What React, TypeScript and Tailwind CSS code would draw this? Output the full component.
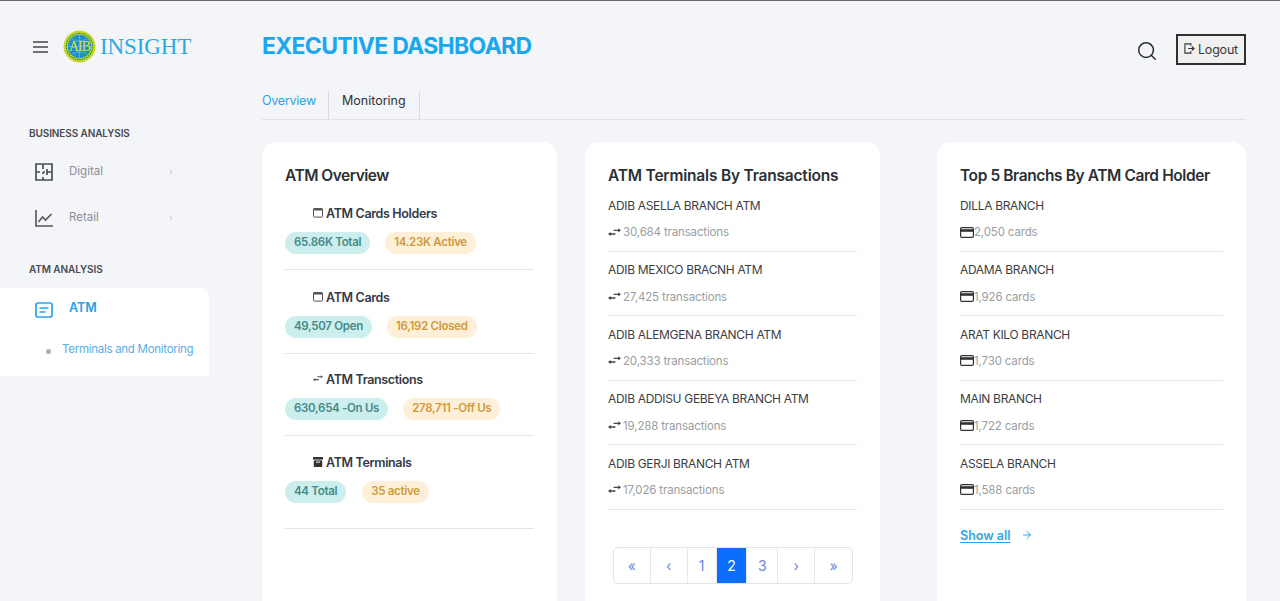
import React from "react";
import { ChevronRight, Search, ArrowRight } from "lucide-react";

const Swap = ({ c = "" }: { c?: string }) => (
  <svg viewBox="0 0 14 9" className={c} fill="currentColor" aria-hidden="true">
    <path d="M6 1.500h5V0l3 2.200-3 2.200V2.900H6z" />
    <path d="M8 5.300H3V3.900L0 6.200l3 2.200V6.800h5z" />
  </svg>
);
const Card = () => (
  <svg viewBox="0 0 14 11" className="w-[14px] h-[11px] shrink-0 -mt-[2px] text-[#333]" aria-hidden="true">
    <rect x="0.6" y="0.6" width="12.8" height="9.8" rx="1.2" fill="none" stroke="currentColor" strokeWidth="1.2" />
    <rect x="0.6" y="2.200" width="12.8" height="2.600" fill="currentColor" />
  </svg>
);
const Win = () => (
  <svg viewBox="0 0 10 10" className="w-[10px] h-[10px] text-[#555]" aria-hidden="true">
    <rect x="0.5" y="0.5" width="9" height="8.6" rx="0.8" fill="none" stroke="currentColor" />
    <rect x="0.5" y="0.5" width="9" height="2" fill="currentColor" />
  </svg>
);
const Archive = () => (
  <svg viewBox="0 0 10 10" className="w-[10px] h-[10px] text-[#333]" aria-hidden="true">
    <rect x="0" y="0" width="10" height="2.6" fill="currentColor" />
    <path d="M.8 3.4h8.4V10H.8z" fill="currentColor" />
    <rect x="3" y="4.6" width="4" height="1" fill="#fff" />
  </svg>
);

const Badge = ({ t, orange }: { t: string; orange?: boolean }) => (
  <span className={`h-[22px] px-[9px] rounded-full flex items-center text-[11.5px] font-semibold tracking-[-0.3px] ${orange ? "bg-[#fef0d8] text-[#d09a3c]" : "bg-[#cceeec] text-[#458a88]"}`}>{t}</span>
);

const Stat = ({ icon, label, a, b, cls, gap }: { icon: React.ReactNode; label: string; a: string; b: string; cls: string; gap: string }) => (
  <div className={`${cls} pt-[1px] border-b border-[#e3e5e8] flex flex-col`}>
    <div className="flex items-center gap-[3px] pl-[28px] h-[20px] text-[12.5px] font-semibold text-[#343a46] tracking-[-0.35px]">
      <span className="w-[10px] flex justify-center -mt-[3px]">{icon}</span>
      {label}
    </div>
    <div className={`flex mt-[8px] ${gap}`}>
      <Badge t={a} />
      <Badge t={b} orange />
    </div>
  </div>
);

const Row = ({ name, sub, icon }: { name: string; sub: string; icon: React.ReactNode }) => (
  <div className="h-[57px] mb-[7.4px] pt-[1px] border-b border-[#e3e5e8] flex flex-col">
    <div className="h-[20px] flex items-center text-[12px] text-[#3d3d44] tracking-[-0.33px]">{name}</div>
    <div className="mt-[7px] h-[20px] flex items-center text-[11.5px] text-[#9a9da2] tracking-[-0.15px]">
      {icon}
      {sub}
    </div>
  </div>
);

const terminals = [
  ["ADIB ASELLA BRANCH ATM", "30,684"],
  ["ADIB MEXICO BRACNH ATM", "27,425"],
  ["ADIB ALEMGENA BRANCH ATM", "20,333"],
  ["ADIB ADDISU GEBEYA BRANCH ATM", "19,288"],
  ["ADIB GERJI BRANCH ATM", "17,026"],
];
const branches = [
  ["DILLA BRANCH", "2,050"],
  ["ADAMA BRANCH", "1,926"],
  ["ARAT KILO BRANCH", "1,730"],
  ["MAIN BRANCH", "1,722"],
  ["ASSELA BRANCH", "1,588"],
];
const pages = [
  { t: "«", w: "w-[37px]" },
  { t: "‹", w: "w-[37px]" },
  { t: "1", w: "w-[29px]" },
  { t: "2", w: "w-[31px]", active: true },
  { t: "3", w: "w-[31px]" },
  { t: "›", w: "w-[37px]" },
  { t: "»", w: "w-[37px]" },
];

const Title = ({ t, cls }: { t: string; cls: string }) => (
  <h2 className={`text-[15.5px] leading-[20px] font-semibold text-[#2b2f36] ${cls}`}>{t}</h2>
);

export default function App() {
  return (
    <div className="h-[601px] w-[1280px] overflow-hidden bg-[#f3f5f8] border-t border-[#666] flex font-['Inter',sans-serif]">
      <aside className="w-[262px] shrink-0">
        <div className="flex items-center h-[33px] mt-[29px] pl-[33px]">
          <svg viewBox="0 0 16 12" className="w-[16px] h-[12px] text-[#444]" aria-hidden="true">
            <path d="M0 1h15M0 6h15M0 11h15" stroke="currentColor" strokeWidth="1.3" fill="none" />
          </svg>
          <svg viewBox="0 0 34 34" className="w-[33px] h-[33px] ml-[14px]" aria-hidden="true">
            <circle cx="17" cy="17" r="16.5" fill="#c6d92e" />
            <circle cx="17" cy="17" r="13.6" fill="none" stroke="#2f7d3a" strokeWidth="1.2" strokeDasharray="1.5 1" />
            <circle cx="17" cy="17" r="12" fill="#1d8fc9" />
            <path d="M5 17h24M17 5v24M9 9c5 3 11 3 16 0M9 25c5-3 11-3 16 0" stroke="#6cc0e6" strokeWidth="0.7" fill="none" />
            <text x="17" y="22" textAnchor="middle" fontSize="14" fontFamily="Liberation Serif, serif" fill="#d7e23f" letterSpacing="-0.8">AIB</text>
          </svg>
          <span className="ml-[4px] -mt-[1px] text-[23px] leading-none text-[#29a9e8] font-['Liberation_Serif',serif] tracking-[-0.1px]">INSIGHT</span>
        </div>

        <div className="mt-[61px] pl-[29px] h-[18px] flex items-center text-[10px] font-semibold text-[#484b50] tracking-[-0.1px]">BUSINESS ANALYSIS</div>

        <div className="mt-[7px] flex flex-col">
          <div className="h-[46px] flex items-center pl-[35px] text-[#8b8e94] text-[11.5px]">
            <svg viewBox="0 0 18 18" className="w-[18px] h-[18px] text-[#4a5058]" fill="none" stroke="currentColor" strokeWidth="1.7" aria-hidden="true">
              <path d="M1 1h16v16H1zM8 1v5M1 9h4M8 9v2M8 14v3M8 9h2M12 9h5M12 6V12" />
            </svg>
            <span className="ml-[16px] w-[98px]">Digital</span>
            <ChevronRight className="w-[8px] h-[8px] text-[#aaa]" />
          </div>
          <div className="h-[46px] flex items-center pl-[35px] text-[#8b8e94] text-[11.5px]">
            <svg viewBox="0 0 18 18" className="w-[18px] h-[18px] text-[#54565a]" fill="none" stroke="currentColor" strokeWidth="1.6" aria-hidden="true">
              <path d="M1 1v16h17M3.500 13l4-5 3 3 6-6" />
            </svg>
            <span className="ml-[16px] w-[98px]">Retail</span>
            <ChevronRight className="w-[8px] h-[8px] text-[#aaa]" />
          </div>
        </div>

        <div className="mt-[19px] pl-[29px] h-[18px] flex items-center text-[10px] font-semibold text-[#484b50] tracking-[-0.1px]">ATM ANALYSIS</div>

        <div className="mt-[10px] w-[209px] h-[88px] bg-white rounded-tr-lg rounded-br-sm">
          <div className="h-[42px] pl-[35px] flex items-center text-[12.5px] font-semibold text-[#22a2e8]">
            <svg viewBox="0 0 18 16" className="w-[18px] h-[16px] mt-[1px]" fill="none" stroke="#2aa5e8" strokeWidth="1.7" aria-hidden="true">
              <rect x="1" y="1" width="16" height="14" rx="2" />
              <path d="M4.500 6h9M4.500 10h6" />
            </svg>
            <span className="ml-[16px] -mt-[2px]">ATM</span>
          </div>
          <div className="pl-[46px] mt-[10px] h-[20px] flex items-center text-[11.5px] text-[#58aee6] tracking-[-0.28px]">
            <span className="w-[5px] h-[5px] rounded-full bg-[#aeb0b3] mr-[11px] mt-[3px]" />
            Terminals and Monitoring
          </div>
        </div>
      </aside>

      <main className="w-[984px] shrink-0">
        <div className="h-[91px] flex items-start justify-between">
          <h1 className="mt-[30px] text-[23px] leading-[30px] font-bold text-[#1ba6f0] tracking-[-0.7px]">EXECUTIVE DASHBOARD</h1>
          <div className="flex items-center mt-[33px]">
            <Search className="w-[22px] h-[22px] text-[#2d3136] mt-[3px]" strokeWidth={1.7} />
            <button className="ml-[18px] w-[70px] h-[31px] pt-[1px] border-2 border-[#2f2f2f] bg-[#f0f0f0] flex items-center justify-center text-[12.5px] text-[#3a3a3a] tracking-[-0.2px]">
              <svg viewBox="0 0 12 12" className="w-[11px] h-[11px] mr-[3px] -mt-[4px] text-[#333]" fill="none" stroke="currentColor" strokeWidth="1.2" aria-hidden="true">
                <path d="M7.500 3V1H1v10h6.500V9" />
                <path d="M4.500 6H11M8.500 3.800L11 6 8.500 8.200" />
              </svg>
              Logout
            </button>
          </div>
        </div>

        <div className="h-[28px] border-b border-[#e0e2e6] flex text-[12.5px]">
          <div className="w-[67px] border-r border-[#d8dade] text-[#29a5ea] tracking-[-0.25px] leading-[18px]">Overview</div>
          <div className="w-[91px] pl-[13px] border-r border-[#d8dade] text-[#333] tracking-[0px] leading-[18px]">Monitoring</div>
        </div>

        <div className="mt-[22px] flex">
          <section className="w-[295px] h-[470px] bg-white rounded-t-[14px] px-[23px] pt-[24px]">
            <Title t="ATM Overview" cls="tracking-[-0.5px]" />
            <div className="flex flex-col mt-[17px]">
              <Stat cls="h-[67px] mb-[17px]" gap="gap-[15px]" icon={<Win />} label="ATM Cards Holders" a="65.86K Total" b="14.23K Active" />
              <Stat cls="h-[67px] mb-[15px]" gap="gap-[15px]" icon={<Win />} label="ATM Cards" a="49,507 Open" b="16,192 Closed" />
              <Stat cls="h-[67px] mb-[16px]" gap="gap-[15px]" icon={<Swap c="w-[10px] h-[7px] text-[#555]" />} label="ATM Transctions" a="630,654 -On Us" b="278,711 -Off Us" />
              <Stat cls="h-[77px]" gap="gap-[16px]" icon={<Archive />} label="ATM Terminals" a="44 Total" b="35 active" />
            </div>
          </section>

          <section className="ml-[28px] w-[295px] h-[470px] bg-white rounded-t-[14px] px-[23px] pt-[24px]">
            <Title t="ATM Terminals By Transactions" cls="tracking-[-0.2px]" />
            <div className="mt-[9px]">
              {terminals.map(([n, v]) => (
                <Row key={n} name={n} sub={`${v} transactions`} icon={<Swap c="w-[13px] h-[9px] mr-[2px] -mt-[2px] text-[#444]" />} />
              ))}
            </div>
            <div className="mt-[37px] ml-[5px] w-[240px] h-[37px] flex border border-[#e0e3e8] rounded-[5px] overflow-hidden">
              {pages.map((p) => (
                <div key={p.t} className={`${p.w} flex items-center justify-center text-[14px] border-r last:border-r-0 border-[#e6e8eb] ${p.active ? "bg-[#0d6efd] text-white" : "text-[#6c86d8]"}`}>{p.t}</div>
              ))}
            </div>
          </section>

          <section className="ml-[57px] w-[309px] h-[470px] bg-white rounded-t-[14px] px-[23px] pt-[24px]">
            <Title t="Top 5 Branchs By ATM Card Holder" cls="tracking-[-0.4px]" />
            <div className="mt-[9px]">
              {branches.map(([n, v]) => (
                <Row key={n} name={n} sub={`${v} cards`} icon={<Card />} />
              ))}
            </div>
            <div className="mt-[17px] h-[20px] flex items-center text-[12.5px] font-semibold text-[#2aa7ec]">
              <span className="underline underline-offset-2">Show all</span>
              <ArrowRight className="w-[12px] h-[12px] ml-[10px] -mt-[3px]" />
            </div>
          </section>
        </div>
      </main>
    </div>
  );
}
